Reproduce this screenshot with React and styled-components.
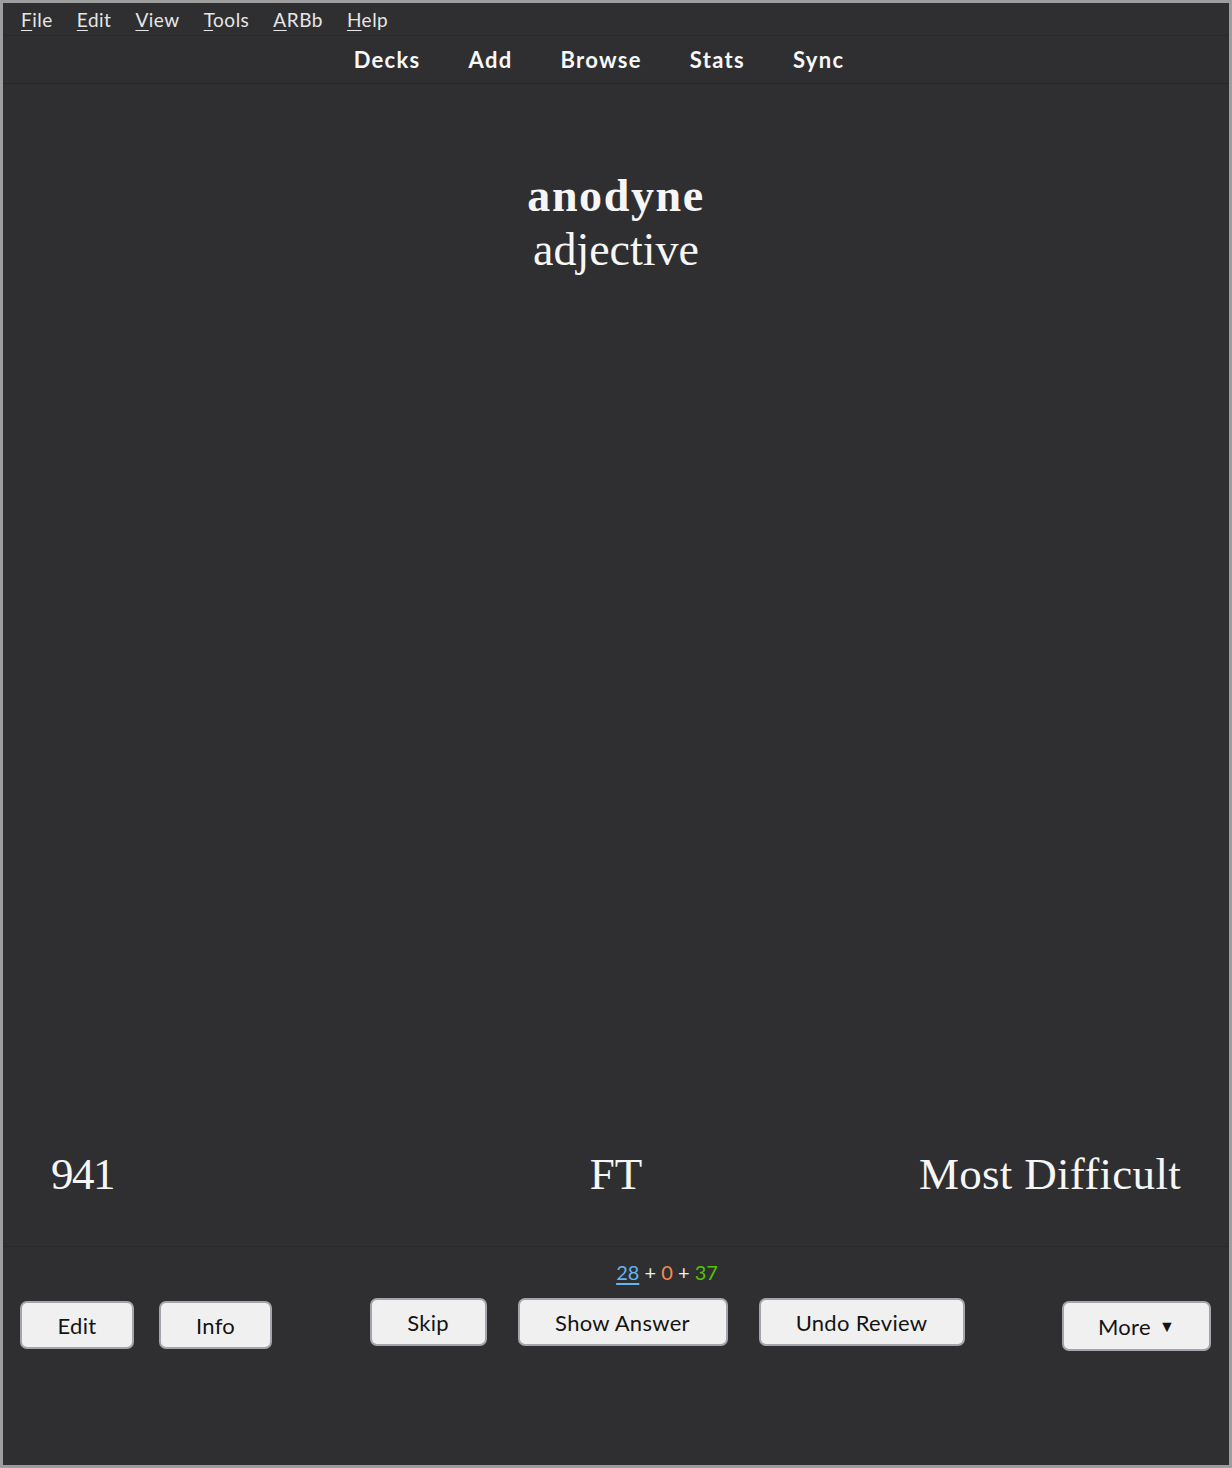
import React from "react";
import styled, { createGlobalStyle } from "styled-components";

const Global = createGlobalStyle`
  html, body { margin: 0; padding: 0; background: #9e9e9e; }
  * { box-sizing: border-box; }
`;

const sans = `"Lato", "Open Sans", sans-serif`;
const serif = `"Liberation Serif", "DejaVu Serif", serif`;

const Window = styled.div`
  width: 1232px;
  height: 1468px;
  border: 3px solid #9e9e9e;
  background: #2f2f31;
  display: flex;
  flex-direction: column;
  overflow: hidden;
`;

const MenuBar = styled.div`
  height: 33px;
  display: flex;
  align-items: center;
  gap: 24px;
  padding-left: 18px;
  border-bottom: 1px solid #29292b;
  font-family: ${sans};
  font-size: 19px;
  letter-spacing: 0.5px;
  color: #e6e6e6;
`;

const MenuItem = styled.span`
  &::first-letter { text-decoration: underline; text-underline-offset: 3px; }
`;

const Toolbar = styled.div`
  height: 48px;
  display: flex;
  align-items: center;
  justify-content: center;
  gap: 48px;
  padding-right: 34px;
  border-bottom: 1px solid #262628;
  font-family: ${sans};
  font-size: 22px;
  letter-spacing: 1.3px;
  font-weight: 700;
  color: #f8f8f8;
`;

const Card = styled.div`
  flex: 1;
  display: flex;
  flex-direction: column;
  justify-content: space-between;
  padding: 85px 48px 46px;
  font-family: ${serif};
  color: #f6f6f6;
  border-bottom: 1px solid #29292b;
`;

const Word = styled.div`
  text-align: center;
  font-size: 46px;
  line-height: 54px;
`;

const Headword = styled.div`
  font-weight: 700;
  letter-spacing: 1.6px;
`;

const Footer = styled.div`
  display: grid;
  grid-template-columns: 1fr auto 1fr;
  align-items: end;
  font-size: 45px;
  line-height: 52px;
`;

const FooterCell = styled.div`
  justify-self: ${(p) => p.$align};
  letter-spacing: ${(p) => p.$spacing || 0}px;
`;

const BottomBar = styled.div`
  height: 218px;
  display: flex;
  justify-content: space-between;
  align-items: flex-start;
  padding: 12px 18px 0 17px;
  font-family: ${sans};
`;

const Group = styled.div`
  display: flex;
  gap: ${(p) => p.$gap || 25}px;
  margin-top: ${(p) => p.$top || 0}px;
`;

const Middle = styled.div`
  display: flex;
  flex-direction: column;
  align-items: center;
  gap: 13px;
`;

const Stats = styled.div`
  font-size: 20px;
  line-height: 26px;
  color: #ececec;
`;

const Count = styled.span`
  color: ${(p) => p.$color};
  text-decoration: ${(p) => (p.$underline ? "underline" : "none")};
  text-underline-offset: 3px;
`;

const Button = styled.button`
  width: ${(p) => p.$w}px;
  height: ${(p) => p.$h || 48}px;
  background: #f0f0f0;
  border: 2px solid #a4a4ac;
  border-radius: 7px;
  font-family: ${sans};
  font-size: 22px;
  letter-spacing: 0.3px;
  color: #141414;
  padding: 0;
  display: flex;
  align-items: center;
  justify-content: center;
  gap: 8px;
`;

const Caret = styled.span`
  font-size: 16px;
`;

export default function App() {
  return (
    <>
      <Global />
      <Window>
        <MenuBar>
          {["File", "Edit", "View", "Tools", "ARBb", "Help"].map((m) => (
            <MenuItem key={m}>{m}</MenuItem>
          ))}
        </MenuBar>
        <Toolbar>
          <span>Decks</span>
          <span>Add</span>
          <span>Browse</span>
          <span>Stats</span>
          <span>Sync</span>
        </Toolbar>
        <Card>
          <Word>
            <Headword>anodyne</Headword>
            <div>adjective</div>
          </Word>
          <Footer>
            <FooterCell $align="start" $spacing={-1.5}>941</FooterCell>
            <FooterCell $align="center">FT</FooterCell>
            <FooterCell $align="end" $spacing={0.3}>Most Difficult</FooterCell>
          </Footer>
        </Card>
        <BottomBar>
          <Group $top={42}>
            <Button $w={114}>Edit</Button>
            <Button $w={113}>Info</Button>
          </Group>
          <Middle>
            <Stats>
              <Count $color="#62b4f2" $underline>28</Count> +{" "}
              <Count $color="#f88a52">0</Count> +{" "}
              <Count $color="#52c400">37</Count>
            </Stats>
            <Group $gap={31}>
              <Button $w={117}>Skip</Button>
              <Button $w={210}>Show Answer</Button>
              <Button $w={206}>Undo Review</Button>
            </Group>
          </Middle>
          <Group $top={42}>
            <Button $w={149} $h={50}>
              More <Caret>▼</Caret>
            </Button>
          </Group>
        </BottomBar>
      </Window>
    </>
  );
}
